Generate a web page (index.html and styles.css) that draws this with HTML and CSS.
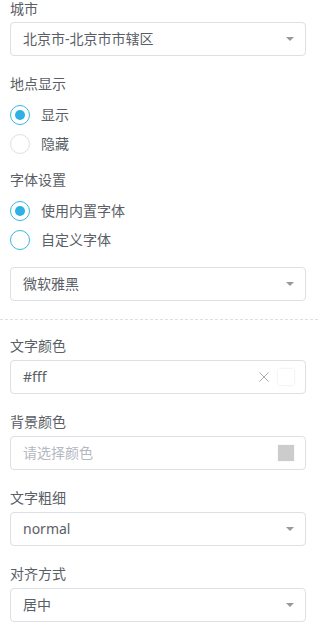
FILE: index.html
```html
<!DOCTYPE html>
<html lang="zh-CN">
<head>
<meta charset="utf-8">
<title>设置</title>
<link rel="stylesheet" href="styles.css">
</head>
<body>
<div class="form">
  <div class="item">
    <div class="label label-first">城市</div>
    <div class="box">
      <span class="val">北京市-北京市市辖区</span>
      <i class="arrow"></i>
    </div>
  </div>
  <div class="item item-radio">
    <div class="label">地点显示</div>
    <div class="radios">
      <div class="radio"><span class="circle checked"></span><span class="rtext">显示</span></div>
      <div class="radio"><span class="circle"></span><span class="rtext">隐藏</span></div>
    </div>
  </div>
  <div class="item item-last">
    <div class="label">字体设置</div>
    <div class="radios">
      <div class="radio"><span class="circle checked"></span><span class="rtext">使用内置字体</span></div>
      <div class="radio"><span class="circle hover"></span><span class="rtext">自定义字体</span></div>
    </div>
    <div class="box box-font">
      <span class="val">微软雅黑</span>
      <i class="arrow"></i>
    </div>
  </div>
</div>
<div class="divider"></div>
<div class="form form-second">
  <div class="item">
    <div class="label">文字颜色</div>
    <div class="box">
      <span class="val">#fff</span>
      <span class="tools">
        <svg class="clear" width="10" height="10" viewBox="0 0 10 10"><path d="M0.5 0.5L9.5 9.5M9.5 0.5L0.5 9.5" stroke="#a8abb2" stroke-width="1" fill="none"/></svg>
        <span class="swatch swatch-white"></span>
      </span>
    </div>
  </div>
  <div class="item">
    <div class="label">背景颜色</div>
    <div class="box">
      <span class="val placeholder">请选择颜色</span>
      <span class="tools">
        <span class="swatch swatch-gray"></span>
      </span>
    </div>
  </div>
  <div class="item">
    <div class="label">文字粗细</div>
    <div class="box">
      <span class="val">normal</span>
      <i class="arrow"></i>
    </div>
  </div>
  <div class="item">
    <div class="label">对齐方式</div>
    <div class="box">
      <span class="val">居中</span>
      <i class="arrow"></i>
    </div>
  </div>
</div>
</body>
</html>
```

FILE: styles.css
```css
* { box-sizing: border-box; }
html, body {
  margin: 0;
  padding: 0;
  background: #fff;
}
body {
  font-family: "Noto Sans", "Noto Sans CJK SC", sans-serif;
  font-size: 14px;
  color: #5a5e66;
  width: 318px;
  overflow: hidden;
}
.form {
  padding: 0 12px 0 10px;
}
.form-second {
  padding-top: 18px;
}
.item {
  margin-bottom: 20px;
}
.item-radio {
  margin-bottom: 14px;
}
.item-last {
  margin-bottom: 0;
}
.label {
  height: 16px;
  line-height: 16px;
  margin-bottom: 6px;
  color: #5a5e66;
}
.label-first {
  height: 16px;
  line-height: 14px;
  padding-top: 2px;
}
.box {
  height: 34px;
  border: 1px solid #dcdfe6;
  border-radius: 4px;
  display: flex;
  align-items: center;
  justify-content: space-between;
  padding: 0 11px 0 12px;
  background: #fff;
}
.box-font {
  margin-top: 13px;
}
.val {
  line-height: 20px;
  color: #5a5e66;
}
.placeholder {
  color: #b4b8bf;
}
.arrow {
  width: 0;
  height: 0;
  border-left: 4px solid transparent;
  border-right: 4px solid transparent;
  border-top: 4px solid #999999;
}
.tools {
  display: flex;
  align-items: center;
  gap: 9px;
}
.clear {
  display: block;
}
.swatch {
  width: 16px;
  height: 16px;
  display: block;
}
.swatch-white {
  background: #fff;
  box-shadow: 0 0 2px rgba(0, 0, 0, 0.12);
}
.swatch-gray {
  background: #cccccc;
  box-shadow: 0 0 1px rgba(0, 0, 0, 0.15);
}
.radios {
  padding-top: 2px;
}
.radio {
  height: 29px;
  display: flex;
  align-items: center;
}
.circle {
  width: 20px;
  height: 20px;
  border-radius: 50%;
  border: 1px solid #dcdfe6;
  display: flex;
  align-items: center;
  justify-content: center;
  margin-right: 11px;
}
.circle.checked,
.circle.hover {
  border-color: #38b6e6;
}
.circle.checked::after {
  content: "";
  width: 10px;
  height: 10px;
  border-radius: 50%;
  background: #2fafe2;
}
.rtext {
  line-height: 20px;
}
.divider {
  margin-top: 18px;
  border-top: 1px dashed #dcdfe6;
}
```
